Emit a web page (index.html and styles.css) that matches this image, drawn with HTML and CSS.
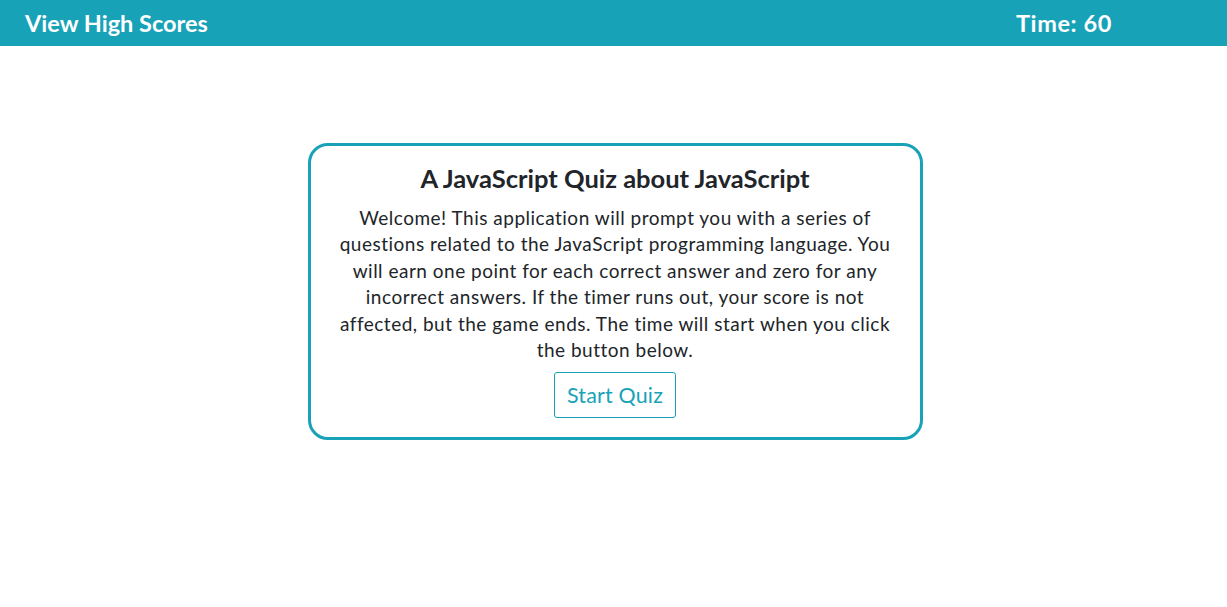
FILE: index.html
```html
<!DOCTYPE html>
<html lang="en">
<head>
<meta charset="utf-8">
<title>JavaScript Quiz</title>
<link rel="stylesheet" href="styles.css">
</head>
<body>
<header class="topbar">
  <a class="scores-link" href="#">View High Scores</a>
  <div class="timer">Time: 60</div>
</header>
<main class="main">
  <section class="card">
    <h1 class="card-title">A JavaScript Quiz about JavaScript</h1>
    <p class="card-text">Welcome! This application will prompt you with a series of questions related to the JavaScript programming language. You will earn one point for each correct answer and zero for any incorrect answers. If the timer runs out, your score is not affected, but the game ends. The time will start when you click the button below.</p>
    <button class="start-btn" type="button">Start Quiz</button>
  </section>
</main>
</body>
</html>
```
FILE: styles.css
```css
html, body {
  margin: 0;
  padding: 0;
  background: #ffffff;
}
body {
  font-family: "Lato", "DejaVu Sans", sans-serif;
  color: #212529;
}
.topbar {
  display: flex;
  justify-content: space-between;
  align-items: center;
  height: 46px;
  background: #17a2b8;
  padding: 0 115px 0 25px;
}
.scores-link, .timer {
  color: #ffffff;
  font-weight: 700;
  font-size: 23.5px;
  letter-spacing: 0;
  text-decoration: none;
}
.timer {
  letter-spacing: 0.6px;
}
.main {
  display: flex;
  justify-content: center;
  padding-top: 97px;
  padding-left: 3px;
}
.card {
  box-sizing: border-box;
  width: 615px;
  border: 3px solid #17a2b8;
  border-radius: 20px;
  padding: 16px 22px 19px;
  display: flex;
  flex-direction: column;
  align-items: center;
  text-align: center;
}
.card-title {
  font-size: 25.5px;
  font-weight: 700;
  margin: 0 0 11px;
  line-height: 32px;
}
.card-text {
  font-size: 19px;
  letter-spacing: 0.5px;
  line-height: 26.4px;
  margin: 0 0 9px;
}
.start-btn {
  font-family: inherit;
  font-size: 21.4px;
  letter-spacing: 0.2px;
  color: #17a2b8;
  background: #ffffff;
  border: 1px solid #17a2b8;
  border-radius: 3px;
  padding: 0 12px;
  height: 46px;
}
```
